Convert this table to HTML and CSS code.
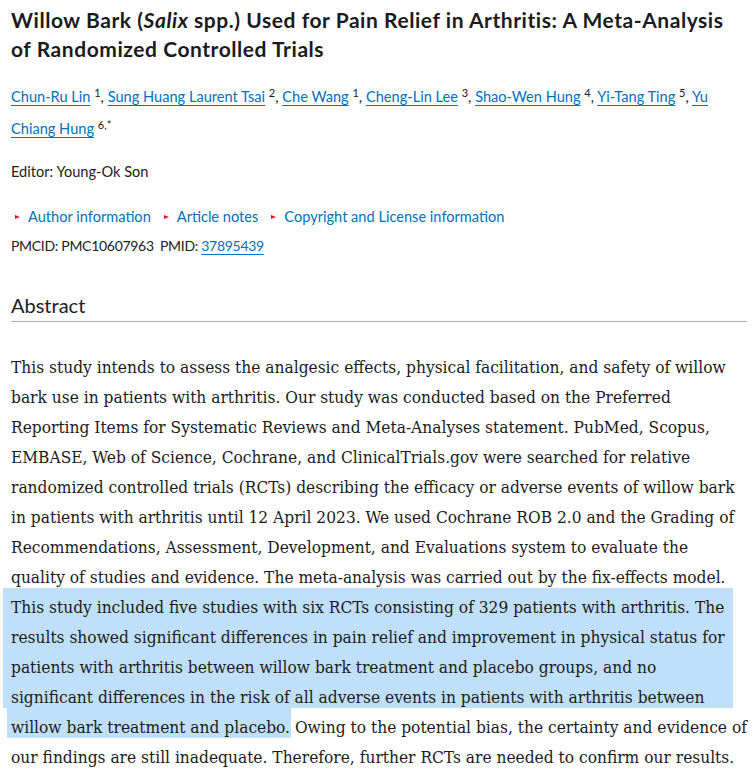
FILE: index.html
```html
<!DOCTYPE html>
<html lang="en">
<head>
<meta charset="utf-8">
<title>Willow Bark (Salix spp.) Used for Pain Relief in Arthritis</title>
<link rel="stylesheet" href="styles.css">
</head>
<body>
<article class="article">
  <h1 class="title">Willow Bark (<em>Salix</em> spp.) Used for Pain Relief in Arthritis: A Meta-Analysis of Randomized Controlled Trials</h1>
  <p class="authors"><a href="#a1">Chun-Ru Lin</a> <sup>1</sup>, <a href="#a2">Sung Huang Laurent Tsai</a> <sup>2</sup>, <a href="#a3">Che Wang</a> <sup>1</sup>, <a href="#a4">Cheng-Lin Lee</a> <sup>3</sup>, <a href="#a5">Shao-Wen Hung</a> <sup>4</sup>, <a href="#a6">Yi-Tang Ting</a> <sup>5</sup>, <a href="#a7">Yu Chiang Hung</a> <sup>6,*</sup></p>
  <p class="editor">Editor: Young-Ok Son</p>
  <ul class="toggles">
    <li><a href="#ai">Author information</a></li>
    <li><a href="#an">Article notes</a></li>
    <li><a href="#cl">Copyright and License information</a></li>
  </ul>
  <p class="ids">PMCID: PMC10607963 <span class="pmid">PMID: <a href="#pmid">37895439</a></span></p>
  <section class="abstract">
    <h2 class="abstract-title">Abstract</h2>
    <div class="abstract-body">
      <span class="hl hl-block"></span><span class="hl hl-tail"></span>
      <p class="abstract-text">This study intends to assess the analgesic effects, physical facilitation, and safety of willow<br>
bark use in patients with arthritis. Our study was conducted based on the Preferred<br>
Reporting Items for Systematic Reviews and Meta-Analyses statement. PubMed, Scopus,<br>
EMBASE, Web of Science, Cochrane, and ClinicalTrials.gov were searched for relative<br>
randomized controlled trials (RCTs) describing the efficacy or adverse events of willow bark<br>
in patients with arthritis until 12 April 2023. We used Cochrane ROB 2.0 and the Grading of<br>
Recommendations, Assessment, Development, and Evaluations system to evaluate the<br>
quality of studies and evidence. The meta-analysis was carried out by the fix-effects model.<br>
This study included five studies with six RCTs consisting of 329 patients with arthritis. The<br>
results showed significant differences in pain relief and improvement in physical status for<br>
patients with arthritis between willow bark treatment and placebo groups, and no<br>
significant differences in the risk of all adverse events in patients with arthritis between<br>
willow bark treatment and placebo. Owing to the potential bias, the certainty and evidence of<br>
our findings are still inadequate. Therefore, further RCTs are needed to confirm our results.</p>
    </div>
  </section>
</article>
</body>
</html>
```

FILE: styles.css
```css
* { box-sizing: border-box; }
html, body { margin: 0; padding: 0; background: #ffffff; }
body {
  font-family: Lato, "Liberation Sans", sans-serif;
  color: #212121;
}
a { color: #0071bc; text-decoration: underline; text-underline-offset: 3px; text-decoration-thickness: 1px; }

.article { padding: 5px 7px 0 11px; }

.title {
  margin: 0;
  max-width: 730px;
  font-size: 21px;
  font-weight: 700;
  letter-spacing: 0.55px;
  line-height: 29px;
  color: #1b1b1b;
}
.title em { font-style: italic; }

.authors {
  margin: 18px 0 0;
  font-size: 14.6px;
  line-height: 32px;
}
.authors sup {
  font-size: 11px;
  line-height: 1;
  vertical-align: 5px;
}

.editor {
  margin: 16px 0 0;
  font-size: 14.6px;
  line-height: 22px;
}

.toggles {
  list-style: none;
  display: flex;
  gap: 13px;
  margin: 23px 0 0;
  padding: 0 0 0 4px;
  font-size: 14.6px;
  line-height: 22px;
}
.toggles li { display: flex; align-items: center; gap: 8px; }
.toggles li::before {
  content: "";
  width: 0;
  height: 0;
  border-left: 5px solid #e8141c;
  border-top: 2.5px solid transparent;
  border-bottom: 2.5px solid transparent;
}
.toggles a { text-decoration: none; }

.ids {
  margin: 7px 0 0;
  font-size: 14px;
  letter-spacing: -0.3px;
  line-height: 22px;
}
.pmid { margin-left: 3px; }

.abstract-title {
  margin: 34px 0 0;
  padding-bottom: 2px;
  border-bottom: 1px solid #9fb0c0;
  font-size: 20px;
  font-weight: 400;
  line-height: 28px;
}

.abstract-body {
  position: relative;
  margin: 30px -7px 0 0;
}
.hl { position: absolute; background: #bfe0f8; }
.hl-block { top: 236px; left: -8px; width: 730px; height: 120px; }
.hl-tail { top: 356px; left: -4px; width: 284px; height: 30px; }

.abstract-text {
  position: relative;
  margin: 0;
  font-family: "DejaVu Serif", "Liberation Serif", serif;
  font-stretch: condensed;
  font-size: 17.2px;
  line-height: 30px;
  color: #1b1b1b;
}
```
